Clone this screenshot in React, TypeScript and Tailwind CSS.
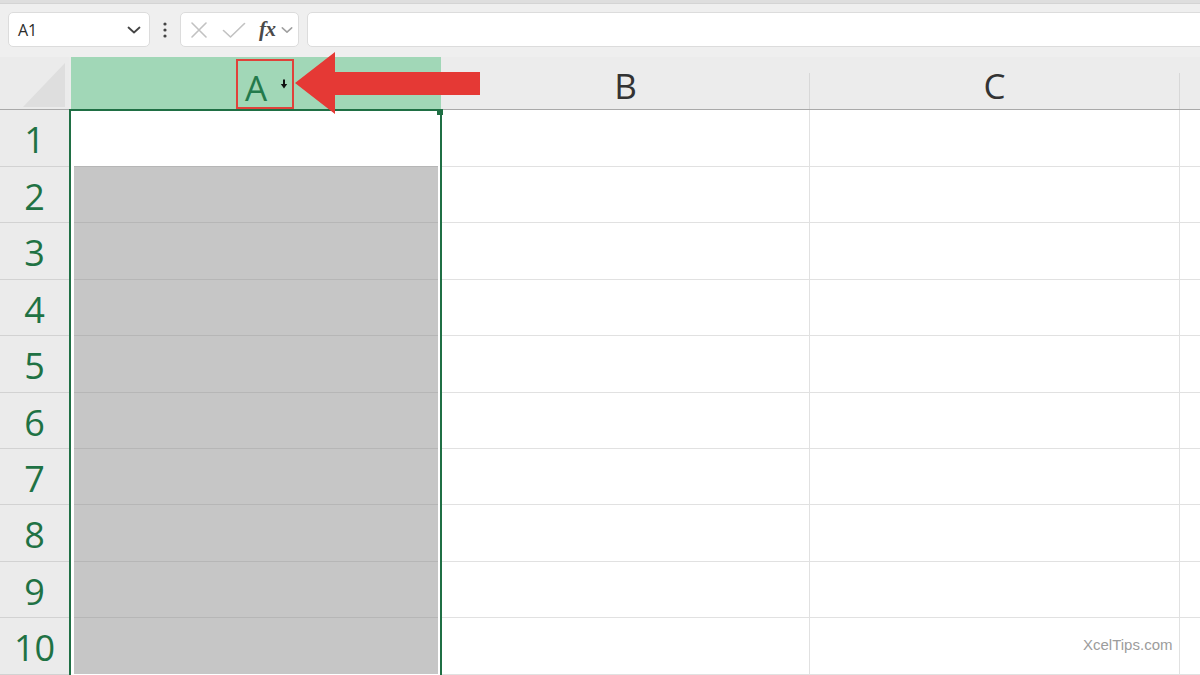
import React from "react";

const rowHeights = [57, 56, 57, 56, 57, 56, 56, 57, 56, 57];
const rows = rowHeights.map((h, i) => ({ n: i + 1, h }));

function ChevronDown({ className }: { className?: string }) {
  return (
    <svg width="14" height="8" viewBox="0 0 14 8" className={className} fill="none">
      <path d="M1.5 1.5 L7 6.5 L12.5 1.5" stroke="currentColor" strokeWidth="1.8" strokeLinecap="round" strokeLinejoin="round" />
    </svg>
  );
}

function Toolbar() {
  return (
    <div className="h-[53px] flex items-start pt-[8px] pl-[8px] shrink-0">
      <div className="w-[142px] shrink-0 h-[35px] bg-white rounded-[5px] border border-[#dcdcdc] flex items-center pl-[9px] pr-[8px]">
        <span className="text-[16px] text-[#2b2b2b] font-['Open_Sans'] flex-1 leading-none">A1</span>
        <ChevronDown className="text-[#444] shrink-0" />
      </div>
      <div className="w-[30px] shrink-0 h-[35px] flex items-center justify-center">
        <svg width="4" height="16" viewBox="0 0 4 16">
          <circle cx="2" cy="2" r="1.6" fill="#444" />
          <circle cx="2" cy="8" r="1.6" fill="#444" />
          <circle cx="2" cy="14" r="1.6" fill="#444" />
        </svg>
      </div>
      <div className="w-[119px] shrink-0 h-[35px] bg-white rounded-[5px] border border-[#dcdcdc] flex items-center pl-[8px]">
        <svg width="18" height="16" viewBox="0 0 18 16" className="ml-[1px] shrink-0">
          <path d="M2 1 L16 15 M16 1 L2 15" stroke="#c2c2c2" strokeWidth="1.6" strokeLinecap="round" />
        </svg>
        <svg width="24" height="16" viewBox="0 0 24 16" className="ml-[14px] shrink-0">
          <path d="M1.5 8.5 L8.5 15 L22.5 1.5" stroke="#c2c2c2" strokeWidth="1.6" strokeLinecap="round" strokeLinejoin="round" fill="none" />
        </svg>
        <span className="ml-[13px] font-['Liberation_Serif'] italic font-bold text-[21px] text-[#4a4a4a] leading-none tracking-[-0.5px]">fx</span>
        <ChevronDown className="ml-[5px] text-[#a0a0a0] w-[12px] shrink-0" />
      </div>
      <div className="ml-[8px] w-[950px] shrink-0 h-[35px] bg-white rounded-[5px] border border-[#dcdcdc]" />
    </div>
  );
}

function RowHeaderColumn() {
  return (
    <div className="w-[69px] shrink-0 flex flex-col bg-[#ebebeb]">
      <div className="h-[53px] border-b border-[#a9a9a9] relative flex items-end justify-end pb-[2px] pr-[4px]">
        <svg width="42" height="44" viewBox="0 0 42 44">
          <polygon points="42,0 42,44 0,44" fill="#dedede" />
        </svg>
      </div>
      {rows.map((r) => (
        <div
          key={r.n}
          style={{ height: r.h }}
          className="border-b border-[#d2d2d2] flex items-center justify-center text-[36px] text-[#1f7244] font-['Open_Sans'] leading-none pt-[4px]"
        >
          {r.n}
        </div>
      ))}
    </div>
  );
}

function ColumnA() {
  return (
    <div className="w-[373px] shrink-0 flex flex-col relative">
      <div className="h-[52px] ml-[2px] mr-[1px] bg-[#a1d7b7] flex items-end">
        <div className="ml-[165px] w-[58px] h-[50px] border-2 border-[#e0413a] flex items-center">
          <span className="ml-[7px] text-[35px] text-[#237a4c] font-['Open_Sans'] leading-none pt-[6px]">A</span>
          <svg width="8" height="10" viewBox="0 0 8 10" className="ml-[13px] mt-[0px]">
            <path d="M4 0.5 L4 6" stroke="#111" strokeWidth="2" />
            <path d="M0.8 5 L7.2 5 L4 9.5 Z" fill="#111" />
          </svg>
        </div>
      </div>
      <div className="flex-1 border-l-2 border-r-2 border-t-2 border-[#1f6f44] flex flex-col bg-white">
        {rows.map((r, i) => (
          <div key={r.n} style={{ height: i === 0 ? r.h - 2 : r.h }} className="flex shrink-0">
            {i === 0 ? (
              <div className="flex-1 bg-white" />
            ) : (
              <div className="flex-1 ml-[3px] mr-[2px] bg-[#c6c6c6] border-t border-[#b6b6b6]" />
            )}
          </div>
        ))}
      </div>
      <div className="absolute left-[368px] top-[52px] w-[6px] h-[6px] bg-[#1f6f44]" />
    </div>
  );
}

function Column({ label, width, last }: { label: string; width?: number; last?: boolean }) {
  return (
    <div className={width ? "shrink-0 flex flex-col" : "flex-1 flex flex-col"} style={width ? { width } : undefined}>
      <div className="h-[53px] border-b border-[#a9a9a9] flex bg-[#ececec]">
        <div className="flex-1 flex items-center justify-center text-[35px] text-[#333] font-['Open_Sans'] leading-none pt-[5px]">
          {label}
        </div>
        {!last && <div className="w-px h-[36px] self-end bg-[#d8d8d8]" />}
      </div>
      {rows.map((r) => (
        <div
          key={r.n}
          style={{ height: r.h }}
          className={"bg-white border-b border-[#e1e1e1] shrink-0 " + (last ? "" : "border-r")}
        />
      ))}
    </div>
  );
}

export default function App() {
  return (
    <div className="w-[1200px] h-[675px] overflow-hidden bg-[#efefef] flex flex-col relative font-['Open_Sans']">
      <div className="h-[4px] shrink-0 bg-[#dedede] border-b border-[#d4d4d4]" />
      <Toolbar />
      <div className="flex-1 flex bg-[#ececec]">
        <RowHeaderColumn />
        <ColumnA />
        <Column label="B" width={368} />
        <Column label="C" width={370} />
        <Column label="" last />
      </div>
      <svg
        className="absolute left-[290px] top-[48px]"
        width="194"
        height="70"
        viewBox="0 0 194 70"
      >
        <polygon points="5,35 45,4 45,24 190,24 190,47 45,47 45,66" fill="#e53935" />
      </svg>
      <div className="absolute left-[1083px] top-[637px] text-[15px] text-[#9c9c9c] font-['Liberation_Sans'] leading-none">
        XcelTips.com
      </div>
    </div>
  );
}
